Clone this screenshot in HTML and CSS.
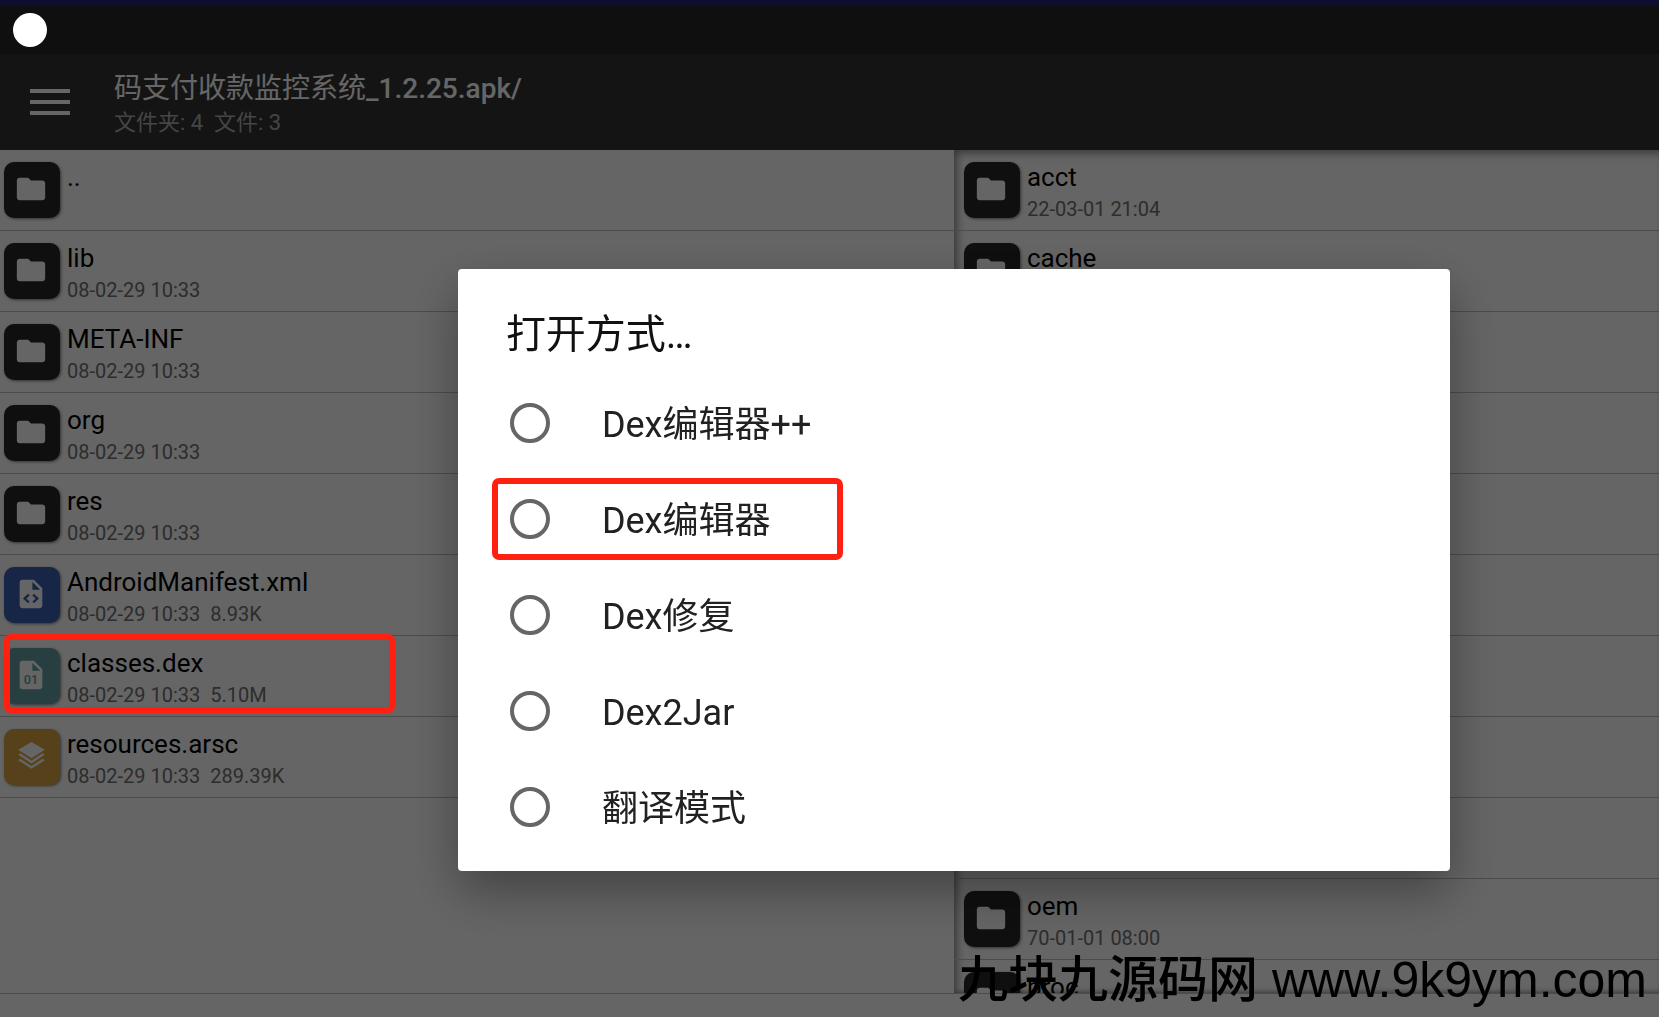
FILE: index.html
```html
<!DOCTYPE html>
<html lang="zh-CN">
<head>
    <meta charset="UTF-8">
    <meta name="viewport" content="width=device-width, initial-scale=1.0">
    <title>文件管理</title>
    <link rel="stylesheet" href="styles.css">
</head>
<body>
    <svg class="Sprite" aria-hidden="true">
        <symbol id="folder" viewBox="0 0 24 24">
            <path d="M10 4H4c-1.100 0-2 .9-2 2v12c0 1.100.9 2 2 2h16c1.100 0 2-.9 2-2V8c0-1.100-.9-2-2-2h-8l-2-2z"/>
        </symbol>
        <symbol id="xml" viewBox="0 0 24 24">
            <path d="M14 2H6a2 2 0 0 0-2 2v16a2 2 0 0 0 2 2h12a2 2 0 0 0 2-2V8l-6-6zM13 9V3.500L18.500 9H13z" fill-rule="evenodd"/>
            <path class="Cut" d="M10.500 12.500L7.500 15.200l3 2.700M13.500 12.500l3 2.700-3 2.700"/>
        </symbol>
        <symbol id="dex" viewBox="0 0 24 24">
            <path d="M14 2H6a2 2 0 0 0-2 2v16a2 2 0 0 0 2 2h12a2 2 0 0 0 2-2V8l-6-6zM13 9V3.500L18.500 9H13z" fill-rule="evenodd"/>
            <text class="Digits" x="12" y="18.500" text-anchor="middle">01</text>
        </symbol>
        <symbol id="layers" viewBox="0 0 24 24">
            <path d="M12 0L1 6.500 12 13.500 23 6.500z"/>
            <path d="M1 10.500l1.800-1.100L12 15.300l9.200-5.900L23 10.500 12 17.700z"/>
            <path d="M1 15l1.800-1.100L12 19.800l9.200-5.900L23 15 12 22.200z"/>
        </symbol>
    </svg>

    <div class="App">
        <div class="Status-Bar">
            <span class="Status-Dot"></span>
        </div>
        <header class="Toolbar">
            <button class="Menu-Button" aria-label="菜单">
                <span></span>
                <span></span>
                <span></span>
            </button>
            <div class="Toolbar-Info">
                <h1>码支付收款监控系统<b>_1.2.25.apk/</b></h1>
                <p>文件夹: 4&nbsp; 文件: 3</p>
            </div>
        </header>
        <main class="Panes">
            <ul class="Pane Pane-Left">
                <li class="File-Item">
                    <div class="File-Icon"><svg><use href="#folder"/></svg></div>
                    <div class="File-Info">
                        <div class="File-Name">..</div>
                    </div>
                </li>
                <li class="File-Item">
                    <div class="File-Icon"><svg><use href="#folder"/></svg></div>
                    <div class="File-Info">
                        <div class="File-Name">lib</div>
                        <div class="File-Meta">08-02-29 10:33</div>
                    </div>
                </li>
                <li class="File-Item">
                    <div class="File-Icon"><svg><use href="#folder"/></svg></div>
                    <div class="File-Info">
                        <div class="File-Name">META-INF</div>
                        <div class="File-Meta">08-02-29 10:33</div>
                    </div>
                </li>
                <li class="File-Item">
                    <div class="File-Icon"><svg><use href="#folder"/></svg></div>
                    <div class="File-Info">
                        <div class="File-Name">org</div>
                        <div class="File-Meta">08-02-29 10:33</div>
                    </div>
                </li>
                <li class="File-Item">
                    <div class="File-Icon"><svg><use href="#folder"/></svg></div>
                    <div class="File-Info">
                        <div class="File-Name">res</div>
                        <div class="File-Meta">08-02-29 10:33</div>
                    </div>
                </li>
                <li class="File-Item">
                    <div class="File-Icon Icon-Xml"><svg><use href="#xml"/></svg></div>
                    <div class="File-Info">
                        <div class="File-Name">AndroidManifest.xml</div>
                        <div class="File-Meta">08-02-29 10:33&nbsp; 8.93K</div>
                    </div>
                </li>
                <li class="File-Item">
                    <div class="File-Icon Icon-Dex"><svg><use href="#dex"/></svg></div>
                    <div class="File-Info">
                        <div class="File-Name">classes.dex</div>
                        <div class="File-Meta">08-02-29 10:33&nbsp; 5.10M</div>
                    </div>
                    <span class="Mark Mark-File"></span>
                </li>
                <li class="File-Item">
                    <div class="File-Icon Icon-Arsc"><svg><use href="#layers"/></svg></div>
                    <div class="File-Info">
                        <div class="File-Name">resources.arsc</div>
                        <div class="File-Meta">08-02-29 10:33&nbsp; 289.39K</div>
                    </div>
                </li>
            </ul>
            <ul class="Pane Pane-Right">
                <li class="File-Item">
                    <div class="File-Icon"><svg><use href="#folder"/></svg></div>
                    <div class="File-Info">
                        <div class="File-Name">acct</div>
                        <div class="File-Meta">22-03-01 21:04</div>
                    </div>
                </li>
                <li class="File-Item">
                    <div class="File-Icon"><svg><use href="#folder"/></svg></div>
                    <div class="File-Info">
                        <div class="File-Name">cache</div>
                    </div>
                </li>
                <li class="File-Item"></li>
                <li class="File-Item"></li>
                <li class="File-Item"></li>
                <li class="File-Item"></li>
                <li class="File-Item"></li>
                <li class="File-Item"></li>
                <li class="File-Item"></li>
                <li class="File-Item">
                    <div class="File-Icon"><svg><use href="#folder"/></svg></div>
                    <div class="File-Info">
                        <div class="File-Name">oem</div>
                        <div class="File-Meta">70-01-01 08:00</div>
                    </div>
                </li>
                <li class="File-Item">
                    <div class="File-Icon"><svg><use href="#folder"/></svg></div>
                    <div class="File-Info">
                        <div class="File-Name">proc</div>
                    </div>
                </li>
            </ul>
        </main>
        <footer class="Bottom-Bar"></footer>
    </div>

    <div class="Backdrop">
        <form class="Dialog" role="dialog" aria-labelledby="Dialog-Title">
            <h2 id="Dialog-Title">打开方式…</h2>
            <label class="Option">
                <input type="radio" name="open-with">
                <span class="Option-Text">Dex编辑器++</span>
            </label>
            <label class="Option">
                <input type="radio" name="open-with">
                <span class="Option-Text">Dex编辑器</span>
                <span class="Mark Mark-Option"></span>
            </label>
            <label class="Option">
                <input type="radio" name="open-with">
                <span class="Option-Text">Dex修复</span>
            </label>
            <label class="Option">
                <input type="radio" name="open-with">
                <span class="Option-Text">Dex2Jar</span>
            </label>
            <label class="Option">
                <input type="radio" name="open-with">
                <span class="Option-Text">翻译模式</span>
            </label>
        </form>
    </div>

    <div class="Watermark">九块九源码网 www.9k9ym.com</div>
</body>
</html>
```
FILE: styles.css
```css
* {
    box-sizing: border-box;
}

body {
    margin: 0;
    font-family: Roboto, "Noto Sans CJK SC", sans-serif;
    overflow: hidden;
}

h1, h2, p, ul {
    margin: 0;
    padding: 0;
}

.Sprite {
    position: absolute;
    width: 0;
    height: 0;
}

.App {
    height: 100vh;
    display: flex;
    flex-direction: column;
    background-color: #fcfcfc;
}

.Status-Bar {
    height: 54px;
    flex: none;
    padding: 7px 13px;
    border-top: 6px solid #212679;
    background-color: #262626;
}

.Status-Dot {
    display: block;
    width: 34px;
    height: 34px;
    border-radius: 50%;
    background-color: #ffffff;
    position: relative;
    z-index: 20;
}

.Toolbar {
    height: 96px;
    flex: none;
    display: flex;
    align-items: center;
    gap: 44px;
    padding: 0 30px;
    background-color: #333333;
    color: #ffffff;
}

.Menu-Button {
    width: 40px;
    padding: 0;
    border: none;
    background: none;
    display: flex;
    flex-direction: column;
    gap: 7px;
}

.Menu-Button span {
    width: 100%;
    height: 4px;
    background-color: #ffffff;
}

.Toolbar-Info {
    padding-top: 6px;
}

.Toolbar-Info h1 {
    font-size: 28px;
    line-height: 36px;
    font-weight: 400;
}

.Toolbar-Info b {
    font-weight: 500;
}

.Toolbar-Info p {
    font-size: 22px;
    line-height: 32px;
    color: #adadad;
}

.Panes {
    flex: 1;
    min-height: 0;
    display: flex;
    border-bottom: 1px solid #bdbdbd;
}

.Pane {
    list-style: none;
    overflow: hidden;
}

.Pane-Left {
    width: 57.5%;
}

.Pane-Right {
    flex: 1;
    box-shadow: inset 5px 5px 8px -2px #8c8c8c, inset 0 -4px 5px -3px #8c8c8c;
}

.File-Item {
    height: 81px;
    display: flex;
    gap: 7px;
    padding: 12px 4px;
    border-bottom: 1px solid #bdbdbd;
    position: relative;
}

.Pane-Right .File-Item {
    padding-left: 10px;
}

.File-Icon {
    width: 56px;
    height: 56px;
    flex: none;
    display: flex;
    align-items: center;
    justify-content: center;
    padding: 0 2px 2px 0;
    border-radius: 10px;
    background-color: #262626;
    box-shadow: 1px 1px 3px rgba(0, 0, 0, 0.5);
}

.File-Icon svg {
    width: 34px;
    height: 34px;
    fill: #fcfcfc;
}

.Icon-Xml {
    background-color: #3a5db0;
    color: #3a5db0;
}

.Icon-Dex {
    background-color: #629ea0;
    color: #629ea0;
}

.Icon-Arsc {
    background-color: #d9a441;
}

.File-Icon.Icon-Arsc svg {
    width: 29px;
    height: 29px;
}

.Cut {
    fill: none;
    stroke: currentColor;
    stroke-width: 1.600;
}

.Digits {
    fill: currentColor;
    font-size: 9px;
    font-weight: 500;
}

.File-Name {
    font-size: 26px;
    line-height: 30px;
    color: #000000;
}

.File-Meta {
    font-size: 20px;
    line-height: 34px;
    color: #707070;
}

.Bottom-Bar {
    height: 23px;
    flex: none;
}

.Backdrop {
    position: fixed;
    inset: 0;
    z-index: 10;
    padding: 269px 12.600% 0 27.600%;
    background-color: rgba(0, 0, 0, 0.6);
}

.Dialog {
    padding-bottom: 16px;
    border-radius: 4px;
    background-color: #ffffff;
    box-shadow: 0 20px 50px rgba(0, 0, 0, 0.35);
}

.Dialog h2 {
    padding: 36px 48px 10px;
    font-size: 40px;
    line-height: 60px;
    font-weight: 400;
    color: #111111;
}

.Option {
    height: 96px;
    display: flex;
    align-items: center;
    gap: 52px;
    padding: 0 52px;
    font-size: 36px;
    line-height: 42px;
    color: #212121;
    position: relative;
}

.Option input {
    appearance: none;
    width: 40px;
    height: 40px;
    margin: 0;
    border: 4px solid #666666;
    border-radius: 50%;
}

.Option input:checked {
    background: radial-gradient(#666666 45%, transparent 50%);
}

.Option-Text {
    padding-top: 4px;
}

/* red frames over the highlighted file and option */
.Mark {
    position: absolute;
    border: 6px solid #ff2010;
    border-radius: 7px;
    pointer-events: none;
}

.Mark-File {
    left: 4px;
    top: -2px;
    width: 391px;
    height: 79px;
    z-index: 20;
}

.Mark-Option {
    left: 34px;
    top: 7px;
    width: 351px;
    height: 82px;
}

.Watermark {
    position: fixed;
    right: 12px;
    bottom: 0;
    z-index: 30;
    font-family: "Liberation Sans", "Noto Sans CJK SC", sans-serif;
    font-size: 50px;
    font-weight: 500;
    line-height: 74px;
    white-space: nowrap;
    color: #000000;
}
```
